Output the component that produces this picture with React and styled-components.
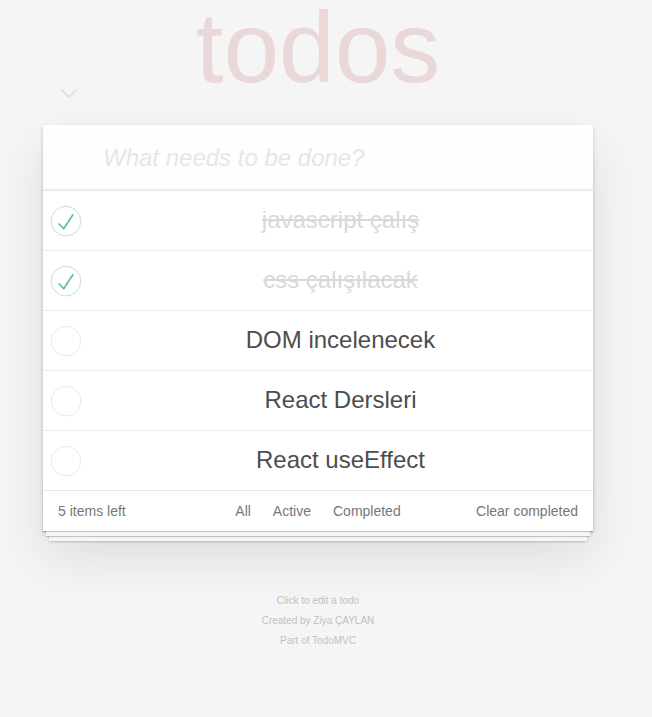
import React from 'react'
import styled, { createGlobalStyle } from 'styled-components';

const todos = [
    { id: 1, title: 'javascript çalış', completed: true },
    { id: 2, title: 'css çalışılacak', completed: true },
    { id: 3, title: 'DOM incelenecek', completed: false },
    { id: 4, title: 'React Dersleri', completed: false },
    { id: 5, title: 'React useEffect', completed: false },
];

function Toggle({ checked }) {
    return (
        <ToggleIcon width="40" height="40" viewBox="-10 -18 100 135">
            <circle cx="50" cy="50" r="50" fill="none" stroke={checked ? '#bddad5' : '#e6e6e6'} strokeWidth="3" />
            {checked && <path fill="#5dc2af" d="M72 25L42 71 27 56l-4 4 20 20 34-52z" />}
        </ToggleIcon>
    )
}

function App() {
    let renderItems = () => {
        return todos.map((todo) => (
            <Item key={todo.id}>
                <Toggle checked={todo.completed} />
                <Label done={todo.completed ? 1 : 0}>{todo.title}</Label>
            </Item>
        ))
    }
    const left = todos.length;
    return (
        <Page>
            <GlobalStyle />
            <Wrapper>
                <Title>todos</Title>
                <ToggleAllRow>
                    <svg width="18" height="11" viewBox="0 0 18 11">
                        <polyline points="1.5,1.5 9,9 16.5,1.5" fill="none" stroke="#e3e3e3" strokeWidth="2" />
                    </svg>
                </ToggleAllRow>
                <TodoApp>
                    <NewTodo placeholder="What needs to be done?" />
                    <List>{renderItems()}</List>
                    <Footer>
                        <Count>{left} items left</Count>
                        <Filters>
                            <Filter>All</Filter>
                            <Filter>Active</Filter>
                            <Filter>Completed</Filter>
                        </Filters>
                        <Clear>Clear completed</Clear>
                    </Footer>
                </TodoApp>
                <Info>
                    <p>Click to edit a todo</p>
                    <p>Created by Ziya ÇAYLAN</p>
                    <p>Part of TodoMVC</p>
                </Info>
            </Wrapper>
        </Page>
    )
};

const GlobalStyle = createGlobalStyle`
    body {
        margin:0;
        background:#f5f5f5;
        font-family:"Liberation Sans", Arial, sans-serif;
        color:#4d4d4d;
    }
`;
const Page = styled.div`
    padding-right:16px;
    min-height:717px;
    overflow:hidden;
`;
const Wrapper = styled.div`
    width:550px;
    margin:0 auto;
`;
const Title = styled.h1`
    margin:0 0 -6px;
    font-size:100px;
    line-height:94px;
    font-weight:100;
    text-align:center;
    color:rgba(175, 47, 47, 0.15);
`;
const ToggleAllRow = styled.div`
    height:37px;
    padding-left:17px;
    display:flex;
    align-items:flex-start;
    position:relative;
`;
const TodoApp = styled.section`
    background:#fff;
    position:relative;
    box-shadow:0 2px 4px 0 rgba(0, 0, 0, 0.2), 0 25px 50px 0 rgba(0, 0, 0, 0.1);
`;
const NewTodo = styled.input`
    display:block;
    box-sizing:border-box;
    width:100%;
    height:65px;
    padding:16px 16px 16px 60px;
    border:none;
    outline:none;
    font-family:inherit;
    font-size:24px;
    line-height:1.4em;
    background:rgba(0, 0, 0, 0.003);
    box-shadow:inset 0 -2px 1px rgba(0, 0, 0, 0.03);
    &::placeholder {
        font-style:italic;
        color:#e6e6e6;
    }
`;
const List = styled.ul`
    margin:0;
    padding:0;
    list-style:none;
    border-top:1px solid #e6e6e6;
`;
const Item = styled.li`
    display:flex;
    align-items:center;
    height:59px;
    border-bottom:1px solid #ededed;
    &:last-child {
        border-bottom:none;
    }
`;
const ToggleIcon = styled.svg`
    flex:none;
    margin-right:20px;
`;
const Label = styled.label`
    flex:1;
    padding:15px 15px 15px 0;
    font-size:24px;
    line-height:1.2;
    text-align:center;
    color:${(p) => (p.done ? '#d9d9d9' : '#4d4d4d')};
    text-decoration:${(p) => (p.done ? 'line-through' : 'none')};
`;
const Footer = styled.footer`
    position:relative;
    display:flex;
    justify-content:space-between;
    align-items:center;
    height:20px;
    padding:10px 15px;
    border-top:1px solid #e6e6e6;
    color:#777;
    font-size:14px;
    &:before {
        content:'';
        position:absolute;
        right:0;
        bottom:0;
        left:0;
        height:50px;
        overflow:hidden;
        box-shadow:0 1px 1px rgba(0, 0, 0, 0.2), 0 8px 0 -3px #f6f6f6, 0 9px 1px -3px rgba(0, 0, 0, 0.2), 0 16px 0 -6px #f6f6f6, 0 17px 2px -6px rgba(0, 0, 0, 0.2);
        z-index:0;
    }
`;
const Count = styled.span`
    position:relative;
    z-index:1;
    width:130px;
`;
const Filters = styled.ul`
    position:relative;
    z-index:1;
    display:flex;
    margin:0;
    padding:0;
    list-style:none;
`;
const Filter = styled.li`
    margin:3px;
    padding:3px 7px;
    border:1px solid transparent;
    border-radius:3px;
`;
const Clear = styled.span`
    position:relative;
    z-index:1;
    width:130px;
    text-align:right;
`;
const Info = styled.footer`
    margin:65px auto 0;
    color:#bfbfbf;
    font-size:10px;
    text-shadow:0 1px 0 rgba(255, 255, 255, 0.5);
    text-align:center;
    p {
        line-height:1;
        margin:10px 0;
    }
`;

export default App;
